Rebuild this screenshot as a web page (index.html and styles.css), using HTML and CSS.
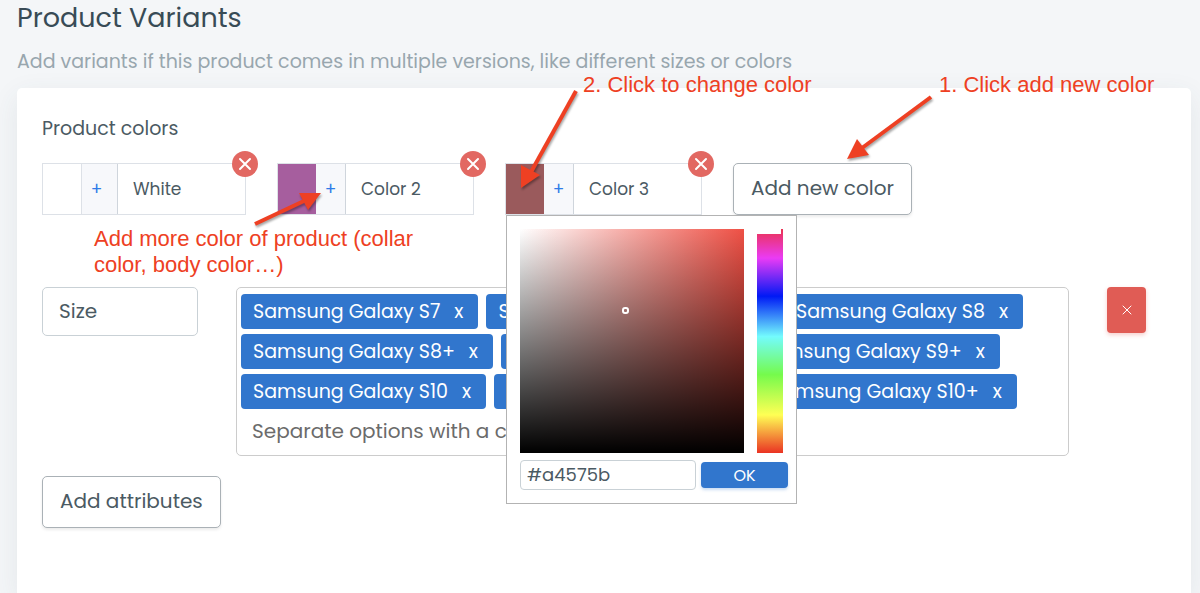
FILE: index.html
```html
<!DOCTYPE html>
<html lang="en">
<head>
    <meta charset="UTF-8">
    <meta name="viewport" content="width=device-width, initial-scale=1.0">
    <title>Product Variants</title>
    <link rel="stylesheet" href="styles.css">
</head>
<body>
    <h1>Product Variants</h1>
    <p class="subtitle">Add variants if this product comes in multiple versions, like different sizes or colors</p>

    <main class="card">
        <h2>Product colors</h2>
        <div class="colors">
            <div class="color-item">
                <button class="swatch white" aria-label="Change color White"></button>
                <button class="add-part wide" aria-label="Add color to White">+</button>
                <input class="color-name" type="text" value="White" aria-label="Color name">
                <button class="remove-color" aria-label="Remove White">
                    <svg viewBox="0 0 26 26"><path d="M8 8L18 18M18 8L8 18"/></svg>
                </button>
            </div>
            <div class="color-item">
                <button class="swatch purple" aria-label="Change color 2"></button>
                <button class="add-part" aria-label="Add color to Color 2">+</button>
                <input class="color-name" type="text" value="Color 2" aria-label="Color name">
                <button class="remove-color" aria-label="Remove Color 2">
                    <svg viewBox="0 0 26 26"><path d="M8 8L18 18M18 8L8 18"/></svg>
                </button>
            </div>
            <div class="color-item">
                <button class="swatch brown" aria-label="Change color 3"></button>
                <button class="add-part" aria-label="Add color to Color 3">+</button>
                <input class="color-name" type="text" value="Color 3" aria-label="Color name">
                <button class="remove-color" aria-label="Remove Color 3">
                    <svg viewBox="0 0 26 26"><path d="M8 8L18 18M18 8L8 18"/></svg>
                </button>
                <div class="picker">
                    <div class="picker-areas">
                        <div class="saturation"><span class="cursor"></span></div>
                        <div class="hue"><span class="hue-marker"></span></div>
                    </div>
                    <div class="picker-footer">
                        <input class="hex" type="text" value="#a4575b" aria-label="Hex color">
                        <button class="ok">OK</button>
                    </div>
                </div>
            </div>
            <button class="btn">Add new color</button>
        </div>

        <div class="attribute">
            <input class="attribute-name" type="text" value="Size" aria-label="Attribute name">
            <div class="tags">
                <div class="tag-row">
                    <span class="tag">Samsung Galaxy S7 <button aria-label="Remove Samsung Galaxy S7">x</button></span>
                    <span class="tag">Samsung Galaxy S7 Edge <button aria-label="Remove Samsung Galaxy S7 Edge">x</button></span>
                    <span class="tag">Samsung Galaxy S8 <button aria-label="Remove Samsung Galaxy S8">x</button></span>
                </div>
                <div class="tag-row">
                    <span class="tag">Samsung Galaxy S8+ <button aria-label="Remove Samsung Galaxy S8+">x</button></span>
                    <span class="tag">Samsung Galaxy S9 <button aria-label="Remove Samsung Galaxy S9">x</button></span>
                    <span class="tag">Samsung Galaxy S9+ <button aria-label="Remove Samsung Galaxy S9+">x</button></span>
                </div>
                <div class="tag-row">
                    <span class="tag">Samsung Galaxy S10 <button aria-label="Remove Samsung Galaxy S10">x</button></span>
                    <span class="tag">Samsung Galaxy S10e <button aria-label="Remove Samsung Galaxy S10e">x</button></span>
                    <span class="tag">Samsung Galaxy S10+ <button aria-label="Remove Samsung Galaxy S10+">x</button></span>
                </div>
                <input class="tag-input" type="text" placeholder="Separate options with a comma" aria-label="Options">
            </div>
            <button class="remove-attribute" aria-label="Remove attribute">
                <svg viewBox="0 0 10 10"><path d="M1 1L9 9M9 1L1 9"/></svg>
            </button>
        </div>

        <button class="btn">Add attributes</button>

        <!-- help notes over the form -->
        <svg class="arrows" width="1174" height="200" viewBox="17 88 1174 200">
            <g class="arrow">
                <path class="line" d="M931 97L862 148"/>
                <path class="head" d="M847 159L857 139L869 155Z"/>
            </g>
            <g class="arrow">
                <path class="line" d="M576 91L531 172"/>
                <path class="head" d="M521 188L521 165L540 175Z"/>
            </g>
            <g class="arrow">
                <path class="line" d="M255 224L306 200"/>
                <path class="head" d="M321 193L299 193L308 210Z"/>
            </g>
        </svg>
        <p class="note note-new">1. Click add new color</p>
        <p class="note note-change">2. Click to change color</p>
        <p class="note note-more">Add more color of product (collar<br>color, body color…)</p>
    </main>
</body>
</html>
```
FILE: styles.css
```css
* {
    box-sizing: border-box;
}
body {
    display: flex;
    flex-direction: column;
    min-height: 100vh;
    margin: 0;
    padding: 0 9px 0 17px;
    background-color: #f4f6f8;
    color: #4b5a63;
    font-family: Poppins, Inter, sans-serif;
}
h1 {
    margin: 0;
    color: #384b56;
    font-size: 27px;
    font-weight: 400;
    line-height: 36px;
}
.subtitle {
    margin: 15px 0;
    color: #98a6ae;
    font-size: 19px;
    line-height: 22px;
}
h2 {
    margin: 0 0 19px;
    font-size: 19px;
    font-weight: 400;
    line-height: 30px;
}
button,
input {
    margin: 0;
    padding: 0;
    border: 0;
    color: inherit;
    font-family: inherit;
}
button {
    cursor: pointer;
}
.card {
    position: relative;
    flex: 1;
    padding: 26px 45px 0 25px;
    background-color: #fff;
    border-radius: 5px 5px 0 0;
    box-shadow: 0 8px 28px rgba(56, 75, 86, 0.09);
}
.colors {
    display: flex;
    gap: 31px;
}
.color-item {
    position: relative;
    display: flex;
    height: 52px;
    border: 1px solid #dde1e7;
}
.swatch {
    width: 38px;
}
.white {
    width: 39px;
    background-color: #fff;
    border-right: 1px solid #dde1e7;
}
.purple {
    background-color: #a65e9e;
}
.brown {
    background-color: #9a5a5c;
}
.add-part {
    width: 29px;
    background-color: #f7f8fb;
    color: #2f7ce8;
    font-size: 17px;
}
.wide {
    width: 35px;
    padding-right: 6px;
}
.color-name {
    width: 128px;
    padding: 0 15px;
    border-left: 1px solid #cfd5dc;
    font-size: 17px;
}
.remove-color {
    position: absolute;
    top: -13px;
    right: -13px;
    width: 26px;
    height: 26px;
    border-radius: 50%;
    background-color: #e26862;
}
.remove-color svg,
.remove-attribute svg {
    display: block;
    fill: none;
    stroke: #fff;
    stroke-linecap: round;
}
.remove-color svg {
    stroke-width: 2;
}
.btn {
    height: 52px;
    padding: 0 17px 2px;
    border: 1px solid #aab1b6;
    border-radius: 5px;
    background-color: #fff;
    box-shadow: 0 2px 3px rgba(0, 0, 0, 0.08);
    font-size: 20px;
}

/* color picker */
.picker {
    position: absolute;
    top: 51px;
    left: 0;
    z-index: 2;
    width: 291px;
    padding: 13px;
    border: 1px solid #b3b3b3;
    background-color: #fff;
}
.picker-areas {
    display: flex;
    gap: 13px;
}
.saturation {
    position: relative;
    width: 224px;
    height: 224px;
    background-image: linear-gradient(to top, #000, transparent), linear-gradient(to right, #fff, #ef5045);
}
.cursor {
    position: absolute;
    top: 78px;
    left: 102px;
    width: 7px;
    height: 7px;
    border: 2px solid #fff;
    border-radius: 3px;
}
.hue {
    position: relative;
    width: 26px;
    background-image: linear-gradient(to bottom, #ea3352, #ea3bf5 13%, #0019f5 30%, #73fbfd 48%, #75fb4c 65%, #ffff54 83%, #ea3323);
}
.hue-marker {
    position: absolute;
    top: 0;
    left: 0;
    width: 24px;
    height: 5px;
    background-color: #fff;
}
.picker-footer {
    display: flex;
    align-items: center;
    gap: 5px;
    margin: 7px -5px 0 0;
}
.hex {
    width: 176px;
    height: 30px;
    padding: 0 6px 2px;
    border: 1px solid #c9d1d6;
    border-radius: 4px;
    font-size: 18px;
}
.ok {
    width: 87px;
    height: 26px;
    border-radius: 4px;
    background-color: #3176cd;
    box-shadow: 0 2px 3px rgba(49, 118, 205, 0.25);
    color: #fff;
    font-size: 16px;
}

/* attributes */
.attribute {
    display: grid;
    grid-template-columns: 156px 1fr 39px;
    align-items: start;
    gap: 38px;
    margin: 72px 0 20px;
}
.attribute-name {
    width: 100%;
    height: 49px;
    padding: 0 16px 2px;
    border: 1px solid #c9d1d6;
    border-radius: 5px;
    font-size: 20px;
}
.tags {
    display: flex;
    flex-direction: column;
    gap: 5px;
    padding: 6px 4px 5px;
    border: 1px solid #ccc;
    border-radius: 5px;
}
.tag-row {
    display: flex;
    gap: 8px;
}
.tag {
    display: flex;
    gap: 14px;
    padding: 0 15px 0 12px;
    border-radius: 4px;
    background-color: #3176cd;
    color: #fff;
    font-size: 19px;
    line-height: 35px;
    white-space: nowrap;
}
.tag button {
    background: none;
    font-size: 19px;
}
.tag-input {
    height: 36px;
    padding: 0 11px 2px;
    font-size: 20px;
}
.tag-input::placeholder {
    color: #6b6b6b;
}
.remove-attribute {
    display: flex;
    align-items: center;
    justify-content: center;
    height: 46px;
    border-radius: 4px;
    background-color: #e05c55;
    box-shadow: 0 2px 4px rgba(224, 92, 85, 0.3);
}
.remove-attribute svg {
    width: 10px;
    height: 10px;
}

/* notes */
.arrows {
    position: absolute;
    top: 0;
    left: 0;
    z-index: 3;
    pointer-events: none;
}
.arrow {
    filter: drop-shadow(1px 2px 1px rgba(0, 0, 0, 0.35));
}
.line {
    stroke: #ee4023;
    stroke-width: 4;
}
.head {
    fill: #ee4023;
}
.note {
    position: absolute;
    z-index: 3;
    margin: 0;
    color: #ee4023;
    font-family: "Liberation Sans", Arial, sans-serif;
    font-size: 22px;
    line-height: 26px;
    white-space: nowrap;
}
.note-new {
    top: -16px;
    left: 922px;
}
.note-change {
    top: -16px;
    left: 566px;
}
.note-more {
    top: 138px;
    left: 77px;
}
```
